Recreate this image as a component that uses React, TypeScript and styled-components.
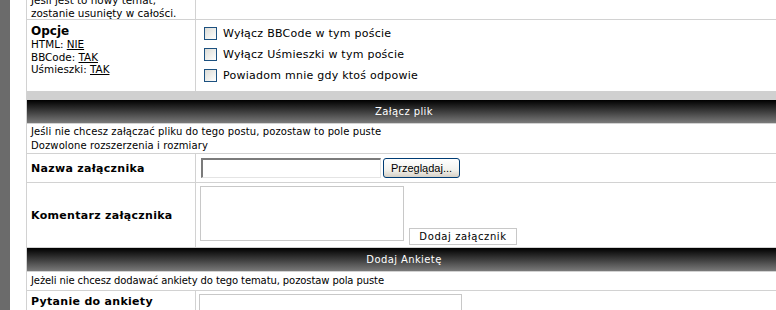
import React from 'react';
import styled, { createGlobalStyle } from 'styled-components';

const GlobalStyle = createGlobalStyle`
  html, body {
    margin: 0;
    padding: 0;
    background: #ffffff;
    overflow: hidden;
  }
  body {
    font-family: 'DejaVu Sans', Verdana, sans-serif;
    color: #000000;
  }
`;

const border = '#d2d2d2';

export default function App() {
  return (
    <>
      <GlobalStyle />
      <Page>
        <SideBar />
        <Form>
          <Row>
            <Label>
              <Small>
                Jeśli jest to nowy temat,
                <br />
                zostanie usunięty w całości.
              </Small>
            </Label>
            <Value />
          </Row>

          <Row $height={71} $noBorder>
            <Label $top>
              <Heading>Opcje</Heading>
              <Small>
                HTML: <Link>NIE</Link>
                <br />
                BBCode: <Link>TAK</Link>
                <br />
                Uśmieszki: <Link>TAK</Link>
              </Small>
            </Label>
            <OptionList>
              <Option>
                <Check />
                Wyłącz BBCode w tym poście
              </Option>
              <Option>
                <Check />
                Wyłącz Uśmieszki w tym poście
              </Option>
              <Option>
                <Check />
                Powiadom mnie gdy ktoś odpowie
              </Option>
            </OptionList>
          </Row>

          <Spacer />

          <Header>Załącz plik</Header>
          <Note>
            Jeśli nie chcesz załączać pliku do tego postu, pozostaw to pole puste
            <br />
            Dozwolone rozszerzenia i rozmiary
          </Note>

          <Row $height={28}>
            <Label>
              <Strong>Nazwa załącznika</Strong>
            </Label>
            <Value>
              <FileField />
              <BrowseButton>Przeglądaj...</BrowseButton>
            </Value>
          </Row>

          <Row $height={64}>
            <Label>
              <Strong>Komentarz załącznika</Strong>
            </Label>
            <CommentCell>
              <Comment />
              <AddButton>Dodaj załącznik</AddButton>
            </CommentCell>
          </Row>

          <Header>Dodaj Ankietę</Header>
          <Note $single>
            Jeżeli nie chcesz dodawać ankiety do tego tematu, pozostaw pola puste
          </Note>

          <Row $height={30} $noBorder>
            <Label $top>
              <Strong>Pytanie do ankiety</Strong>
            </Label>
            <Value $top>
              <Question />
            </Value>
          </Row>
        </Form>
      </Page>
    </>
  );
}

const Page = styled.div`
  display: flex;
  height: 310px;
  overflow: hidden;
`;

const SideBar = styled.div`
  width: 10px;
  flex: none;
  background: #6b6b6b;
  margin-right: 16px;
`;

const Form = styled.div`
  width: 754px;
  flex: none;
  margin-top: -6px;
  border-left: 1px solid ${border};
  display: flex;
  flex-direction: column;
`;

const Row = styled.div<{ $height?: number; $noBorder?: boolean }>`
  display: grid;
  grid-template-columns: 169px 1fr;
  height: ${({ $height }) => ($height ? `${$height}px` : 'auto')};
  border-bottom: ${({ $noBorder }) =>
    $noBorder ? 'none' : `1px solid ${border}`};
  flex: none;
`;

const Label = styled.div<{ $top?: boolean }>`
  border-right: 1px solid ${border};
  padding: ${({ $top }) => ($top ? '4px 4px 0' : '0 4px')};
  display: flex;
  flex-direction: column;
  justify-content: ${({ $top }) => ($top ? 'flex-start' : 'center')};
`;

const Small = styled.span`
  font-size: 10.4px;
  line-height: 12.5px;
`;

const Heading = styled.span`
  font-size: 12px;
  font-weight: bold;
  line-height: 14px;
`;

const Strong = styled.span`
  font-size: 11px;
  font-weight: bold;
  letter-spacing: 0.3px;
`;

const Link = styled.span`
  text-decoration: underline;
`;

const Value = styled.div<{ $top?: boolean }>`
  display: flex;
  align-items: ${({ $top }) => ($top ? 'flex-start' : 'center')};
  padding: ${({ $top }) => ($top ? '3px 3px 0' : '0 5px')};
  gap: 2px;
`;

const OptionList = styled.div`
  display: flex;
  flex-direction: column;
  padding: 7px 8px 0;
  gap: 8px;
`;

const Option = styled.label`
  display: flex;
  align-items: center;
  gap: 6px;
  font-size: 11px;
  height: 13px;
  letter-spacing: 0.25px;
`;

const Check = styled.span`
  width: 11px;
  height: 11px;
  border: 1px solid #1c5180;
  background: linear-gradient(135deg, #dcdcd7 0%, #f4f4f1 70%, #ffffff 100%);
  flex: none;
`;

const Spacer = styled.div`
  height: 9px;
  background: #d0d0d0;
  flex: none;
`;

const Header = styled.div`
  height: 23px;
  flex: none;
  background: linear-gradient(to bottom, #000000 0%, #2a2a2a 35%, #7a7a7a 100%);
  border-bottom: 1px solid ${border};
  color: #ffffff;
  font-size: 10px;
  letter-spacing: 0.4px;
  display: flex;
  align-items: center;
  justify-content: center;
`;

const Note = styled.div<{ $single?: boolean }>`
  font-size: 10px;
  line-height: 14px;
  padding: ${({ $single }) => ($single ? '2px 4px 1px' : '1px 4px 0')};
  height: ${({ $single }) => ($single ? '15px' : '28px')};
  border-bottom: 1px solid ${border};
  flex: none;
  letter-spacing: ${({ $single }) => ($single ? '-0.1px' : '0.1px')};
`;

const FileField = styled.div`
  width: 177px;
  height: 17px;
  border-top: 2px solid #7b7b7b;
  border-left: 2px solid #7b7b7b;
  border-right: 1px solid #e4e4e4;
  border-bottom: 1px solid #e4e4e4;
  background: #ffffff;
`;

const BrowseButton = styled.button`
  width: 77px;
  height: 20px;
  margin: 0;
  padding: 0;
  border: 1px solid #003c74;
  border-radius: 3px;
  background: linear-gradient(to bottom, #ffffff 0%, #f2f2ee 60%, #d6d0c5 100%);
  font-family: 'Liberation Sans', Arial, sans-serif;
  font-size: 11px;
  color: #000000;
`;

const CommentCell = styled.div`
  display: flex;
  align-items: flex-end;
  gap: 5px;
  padding: 3px 4px 2px;
`;

const Comment = styled.div`
  width: 202px;
  height: 53px;
  margin-bottom: 4px;
  border: 1px solid #c8c8c8;
  background: #ffffff;
  align-self: flex-start;
`;

const AddButton = styled.button`
  width: 108px;
  height: 17px;
  margin: 0;
  padding: 0;
  border: 1px solid #c8c8c8;
  background: #ffffff;
  font-family: 'DejaVu Sans', Verdana, sans-serif;
  font-size: 10px;
  letter-spacing: 0.6px;
  color: #000000;
`;

const Question = styled.div`
  width: 261px;
  height: 16px;
  border: 1px solid #c8c8c8;
  background: #ffffff;
`;
